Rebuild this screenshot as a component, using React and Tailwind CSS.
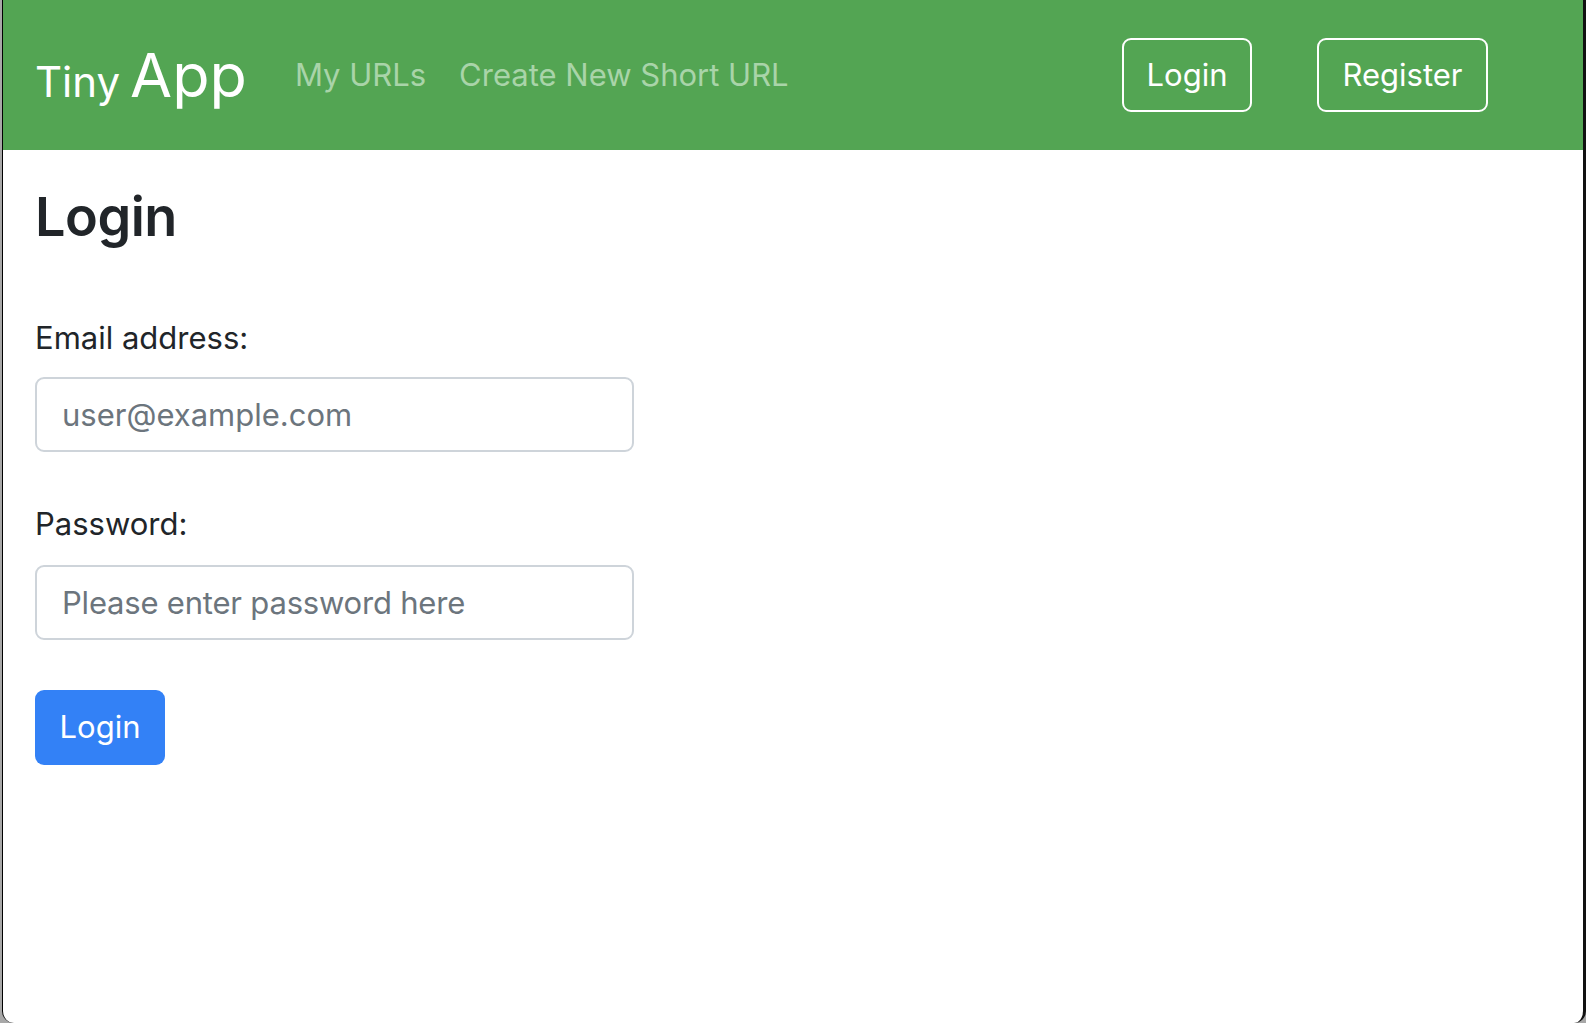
import React from 'react';

// Top navigation bar
const Navbar = () => {
  return (
    <nav className="flex items-center h-[150px] bg-[#53a553] pl-[32px] pr-[95px]">
      <a href="#" className="flex items-baseline text-white leading-none">
        <span className="text-[42px]">Tiny</span>
        <span className="text-[61px] ml-[10px]">App</span>
      </a>
      <div className="flex items-center ml-[48px] gap-[33px] text-[31px] text-[#a9d4a9]">
        <a href="#">My URLs</a>
        <a href="#">Create New Short URL</a>
      </div>
      <div className="flex items-center ml-auto gap-[65px]">
        <button className="w-[130px] h-[74px] border-2 border-white rounded-[9px] text-white text-[31px]">
          Login
        </button>
        <button className="w-[171px] h-[74px] border-2 border-white rounded-[9px] text-white text-[31px]">
          Register
        </button>
      </div>
    </nav>
  );
};

function App() {
  return (
    <div className="flex h-screen bg-[#a8a8a8] font-[Inter,sans-serif] text-[#212529]">
      <div className="w-[2px]"></div>
      <div className="flex-1 flex flex-col bg-white border-l border-black border-r-[3px] border-r-[#111] rounded-b-[12px] overflow-hidden">
        <Navbar />
        <main className="pl-[32px]">
          <h1 className="mt-[35px] text-[54px] font-semibold tracking-[-0.5px] leading-[1.2]">Login</h1>
          <form className="mt-[65px] w-[599px]">
            <label className="block text-[31px] leading-[1.5]">Email address:</label>
            <input
              type="email"
              placeholder="user@example.com"
              className="mt-[16px] w-full h-[75px] px-[25px] border-2 border-[#ced4da] rounded-[9px] text-[31px] placeholder:text-[#6c757d] outline-none"
            />
            <label className="block mt-[49px] text-[31px] leading-[1.5]">Password:</label>
            <input
              type="password"
              placeholder="Please enter password here"
              className="mt-[17px] w-full h-[75px] px-[25px] border-2 border-[#ced4da] rounded-[9px] text-[31px] tracking-[-0.2px] placeholder:text-[#6c757d] outline-none"
            />
            <button
              type="submit"
              className="block mt-[50px] w-[130px] h-[75px] bg-[#3381f6] text-white text-[31px] rounded-[9px]"
            >
              Login
            </button>
          </form>
        </main>
      </div>
    </div>
  );
}

export default App;
